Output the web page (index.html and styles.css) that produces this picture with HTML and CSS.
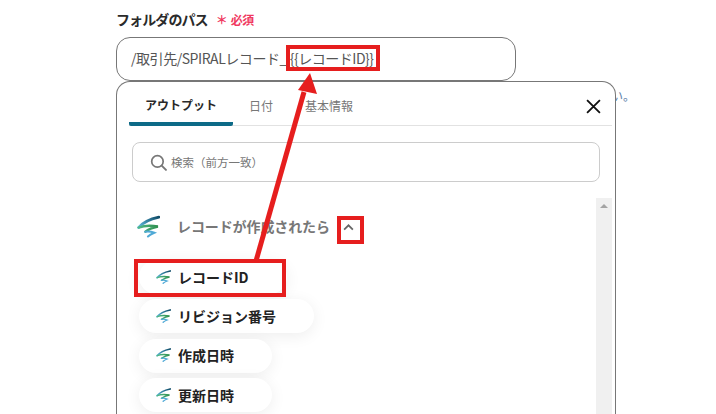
FILE: index.html
```html
<!DOCTYPE html>
<html lang="ja">
<head>
<meta charset="utf-8">
<title>フォルダのパス</title>
<link rel="stylesheet" href="styles.css">
</head>
<body>
<svg class="defs" width="0" height="0" aria-hidden="true">
  <defs>
    <linearGradient id="g1" x1="1" y1="0" x2="0" y2="1">
      <stop offset="0" stop-color="#0f4c68"/>
      <stop offset="1" stop-color="#63bfe6"/>
    </linearGradient>
    <linearGradient id="g2" x1="0" y1="0" x2="1" y2="0">
      <stop offset="0" stop-color="#52b788"/>
      <stop offset="1" stop-color="#2f8f4e"/>
    </linearGradient>
    <symbol id="logo" viewBox="0 0 22 21">
      <path d="M21 1.5C14 3 6 6 1.5 11.5" fill="none" stroke="url(#g1)" stroke-width="2.6" stroke-linecap="round"/>
      <path d="M1.5 11.5C7 9.5 14 9.5 20 10.5C15 11.5 11 13 8 15.5" fill="none" stroke="url(#g2)" stroke-width="2.2" stroke-linecap="round"/>
      <path d="M8 15.5C11 15 14 15.5 16.5 16.5C14 17.5 12 18.5 10.5 20" fill="none" stroke="#4fa9d6" stroke-width="2" stroke-linecap="round"/>
    </symbol>
  </defs>
</svg>
<main class="page">
  <div class="label-row">
    <span class="label">フォルダのパス</span>
    <span class="req-star">＊</span>
    <span class="req">必須</span>
  </div>
  <div class="path-input">/取引先/SPIRALレコード_<span class="token">{{レコードID}}</span></div>
  <p class="note">取得した値を使用してください。</p>
  <section class="panel">
    <div class="tabs">
      <span class="tab tab-active">アウトプット</span>
      <span class="tab tab-date">日付</span>
      <span class="tab tab-basic">基本情報</span>
      <svg class="close" viewBox="0 0 14 14" width="15" height="15"><path d="M1 1L13 13M13 1L1 13" stroke="#111" stroke-width="1.7" fill="none"/></svg>
    </div>
    <div class="search">
      <svg class="search-icon" viewBox="0 0 16 16" width="17" height="17"><circle cx="7" cy="7" r="5.4" fill="none" stroke="#777" stroke-width="1.6"/><path d="M11 11L15 15" stroke="#777" stroke-width="1.8" stroke-linecap="round"/></svg>
      <span>検索（前方一致）</span>
    </div>
    <div class="list-wrap">
      <div class="list">
        <div class="group">
          <svg class="group-logo"><use href="#logo"/></svg>
          <span class="group-title">レコードが作成されたら</span>
          <svg class="chevron" viewBox="0 0 12 8" width="11" height="7"><path d="M1 6.5L6 1.5L11 6.5" fill="none" stroke="#666" stroke-width="2"/></svg>
        </div>
        <div class="pills">
          <div class="pill"><svg class="pill-logo"><use href="#logo"/></svg>レコードID</div>
          <div class="pill"><svg class="pill-logo"><use href="#logo"/></svg>リビジョン番号</div>
          <div class="pill"><svg class="pill-logo"><use href="#logo"/></svg>作成日時</div>
          <div class="pill"><svg class="pill-logo"><use href="#logo"/></svg>更新日時</div>
        </div>
      </div>
      <div class="scrollbar"><span class="scroll-up"></span></div>
    </div>
  </section>
</main>
<div class="mark mark-token"></div>
<div class="mark mark-chevron"></div>
<div class="mark mark-pill"></div>
<svg class="arrow" viewBox="0 0 716 414" width="716" height="414" aria-hidden="true">
  <path d="M256 261L304 92" stroke="#e61e1e" stroke-width="5" fill="none"/>
  <path d="M310 73L298 90L317 94Z" fill="#e61e1e"/>
</svg>
</body>
</html>
```
FILE: styles.css
```css
* { box-sizing: border-box; }
html, body {
  margin: 0;
  height: 414px;
  overflow: hidden;
  background: #fff;
  font-family: "Noto Sans CJK JP", "Noto Sans", sans-serif;
}
.defs { position: absolute; }
.page {
  position: relative;
  width: 500px;
  margin-left: 116px;
  padding-top: 9px;
}
.label-row {
  display: flex;
  align-items: center;
  height: 19px;
  margin-bottom: 9px;
}
.label { font-size: 14px; font-weight: 700; color: #2a2a2a; letter-spacing: -0.9px; }
.req-star { font-size: 12px; font-weight: 700; color: #f0395f; margin: 2px 0 0 8px; width: 12px; text-align: center; line-height: 1; }
.req { font-size: 12px; font-weight: 700; color: #f0395f; margin: 1px 0 0 3px; letter-spacing: -0.5px; }
.path-input {
  width: 400px;
  height: 44px;
  border: 1px solid #777;
  border-radius: 14px;
  padding-left: 14px;
  font-size: 14px;
  line-height: 40px;
  color: #555;
  letter-spacing: -0.45px;
  white-space: nowrap;
  overflow: hidden;
}
.token { letter-spacing: -0.5px; margin-left: 3px; }
.note {
  position: absolute;
  top: 88px;
  right: -19px;
  margin: 0;
  font-size: 12px;
  line-height: 16px;
  color: #5a7ea8;
  white-space: nowrap;
}
.panel {
  position: relative;
  height: 350px;
  background: #fff;
  border: 1px solid #777;
  border-bottom: 0;
  border-radius: 14px 14px 0 0;
  padding: 0 3px 0 12px;
}
.tabs {
  position: relative;
  display: flex;
  height: 44px;
  border-bottom: 1px solid #e2e2e2;
  align-items: center;
  font-size: 12px;
  color: #777;
}
.tab { padding-top: 4px; letter-spacing: 0; }
.tab-active {
  align-self: stretch;
  width: 104px;
  padding: 14px 0 0 16px;
  color: #2a2a2a;
  font-weight: 700;
  border-bottom: 4px solid #0d6a87;
  border-radius: 0 0 2px 2px;
  margin-bottom: -1px;
}
.tab-date { margin-left: 16px; }
.tab-basic { margin-left: 32px; }
.close { position: absolute; right: 11px; top: 17px; }
.search {
  display: flex;
  align-items: center;
  width: 468px;
  height: 40px;
  margin: 16px 0 16px 3px;
  padding-left: 17px;
  border: 1px solid #ccc;
  border-radius: 8px;
  font-size: 11.5px;
  color: #777;
}
.search-icon { margin-right: 4px; }
.list-wrap { display: flex; }
.list { flex: 1; padding-left: 8px; }
.group {
  display: flex;
  align-items: center;
  height: 46px;
  margin-top: 5px;
  color: #777;
}
.group-logo { width: 23px; height: 23px; }
.group-title { margin-left: 17px; font-size: 14px; font-weight: 700; letter-spacing: -0.1px; }
.chevron { margin-left: 13px; margin-top: 3px; }
.pills {
  display: flex;
  flex-direction: column;
  align-items: flex-start;
  gap: 5.4px;
  margin-top: 11px;
  padding-left: 2px;
}
.pill {
  display: flex;
  align-items: center;
  height: 34px;
  padding: 0 38px 1px 17px;
  border-radius: 17px;
  background: #fff;
  font-size: 14px;
  font-weight: 700;
  color: #222;
  box-shadow: 0 3px 16px rgba(0, 0, 0, .07);
}
.pill-logo { width: 15px; height: 14px; margin-right: 7px; }
.scrollbar {
  width: 16px;
  height: 216px;
  background: #f0f0f0;
  flex: none;
  display: flex;
  justify-content: center;
  padding-top: 6px;
}
.scroll-up {
  width: 0;
  height: 0;
  border-left: 4px solid transparent;
  border-right: 4px solid transparent;
  border-bottom: 4px solid #a4a4a4;
}
.mark { position: absolute; border: 4px solid #e61e1e; }
.mark-token { left: 286px; top: 45px; width: 94px; height: 26px; }
.mark-chevron { left: 337px; top: 216px; width: 27px; height: 28px; }
.mark-pill { left: 134px; top: 259px; width: 152px; height: 38px; }
.arrow { position: absolute; left: 0; top: 0; pointer-events: none; }
```
